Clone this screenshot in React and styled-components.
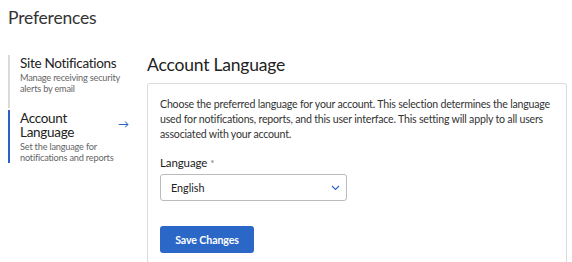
import React, { useState } from 'react';
import styled, { createGlobalStyle } from 'styled-components';

const GlobalStyle = createGlobalStyle`
  body {
    margin: 0;
    background: #fff;
    font-family: Lato, 'Liberation Sans', sans-serif;
    color: #222;
  }
`;

const Page = styled.div`
  padding: 6px 5px 0 8px;
  width: 572px;
  height: 262px;
  overflow: hidden;
  box-sizing: border-box;
`;

const PageTitle = styled.h1`
  margin: 0 0 25px 0;
  font-size: 17.5px;
  font-weight: 400;
  color: #333;
  line-height: 24px;
  letter-spacing: -0.2px;
`;

const Layout = styled.div`
  display: flex;
  gap: 12px;
`;

const Nav = styled.nav`
  width: 127px;
  flex-shrink: 0;
  display: flex;
  flex-direction: column;
  gap: 2px;
`;

const NavItem = styled.div`
  border-left: 2px solid ${(p) => (p.active ? '#2a62c6' : '#dadada')};
  padding: 0 6px 0 10px;
  min-height: 53px;
  box-sizing: border-box;
  display: flex;
  align-items: flex-start;
  justify-content: space-between;
`;

const NavText = styled.div`
  width: 100px;
`;

const NavTitle = styled.div`
  font-size: 13.5px;
  line-height: 14px;
  letter-spacing: -0.3px;
  color: #222;
  margin: 1px 0 3px 0;
`;

const NavDesc = styled.div`
  font-size: 9.2px;
  line-height: 10.5px;
  letter-spacing: -0.2px;
  color: #666;
  margin-right: -6px;
`;

const Arrow = styled.span`
  color: #2a62c6;
  font-size: 11px;
  line-height: 11px;
  margin-top: 8px;
`;

const Main = styled.div`
  flex: 1;
`;

const SectionTitle = styled.h2`
  margin: -2px 0 6px 0;
  font-size: 17.5px;
  font-weight: 400;
  color: #222;
  line-height: 24px;
  letter-spacing: -0.2px;
`;

const Card = styled.div`
  border: 1px solid #dcdcdc;
  border-bottom: none;
  border-radius: 3px 3px 0 0;
  padding: 13px 6px 10px 12px;
  height: 200px;
`;

const Description = styled.p`
  margin: 0 0 14px 0;
  font-size: 10.6px;
  line-height: 15px;
  letter-spacing: -0.2px;
  color: #333;
`;

const Label = styled.label`
  display: block;
  font-size: 11.5px;
  line-height: 14px;
  letter-spacing: -0.1px;
  color: #222;
  margin-bottom: 4px;

  span {
    color: #777;
    font-size: 10px;
  }
`;

const SelectBox = styled.div`
  width: 187px;
  height: 27px;
  box-sizing: border-box;
  border: 1px solid #bbb;
  border-radius: 3px;
  display: flex;
  align-items: center;
  justify-content: space-between;
  padding: 0 6px 0 10px;
  font-size: 10.8px;
  color: #222;
`;

const Button = styled.button`
  display: block;
  margin-top: 25px;
  width: 94px;
  height: 27px;
  background: #2b67c6;
  border: none;
  border-radius: 3px;
  color: #fff;
  font-family: inherit;
  font-weight: 700;
  font-size: 10.6px;
  letter-spacing: -0.1px;
`;

const App = () => {
  const [language] = useState('English');

  return (
    <Page>
      <GlobalStyle />
      <PageTitle>Preferences</PageTitle>
      <Layout>
        <Nav>
          <NavItem>
            <NavText>
              <NavTitle>Site Notifications</NavTitle>
              <NavDesc>Manage receiving security alerts by email</NavDesc>
            </NavText>
          </NavItem>
          <NavItem active>
            <NavText>
              <NavTitle>Account Language</NavTitle>
              <NavDesc>Set the language for notifications and reports</NavDesc>
            </NavText>
            <Arrow>→</Arrow>
          </NavItem>
        </Nav>
        <Main>
          <SectionTitle>Account Language</SectionTitle>
          <Card>
            <Description>
              Choose the preferred language for your account. This selection determines the language
              used for notifications, reports, and this user interface. This setting will apply to all users
              associated with your account.
            </Description>
            <Label>
              Language <span>*</span>
            </Label>
            <SelectBox>
              {language}
              <svg width="9" height="6" viewBox="0 0 9 6">
                <path d="M1 1l3.5 3.5L8 1" fill="none" stroke="#2a62c6" strokeWidth="1.1" />
              </svg>
            </SelectBox>
            <Button>Save Changes</Button>
          </Card>
        </Main>
      </Layout>
    </Page>
  );
};

export default App;
